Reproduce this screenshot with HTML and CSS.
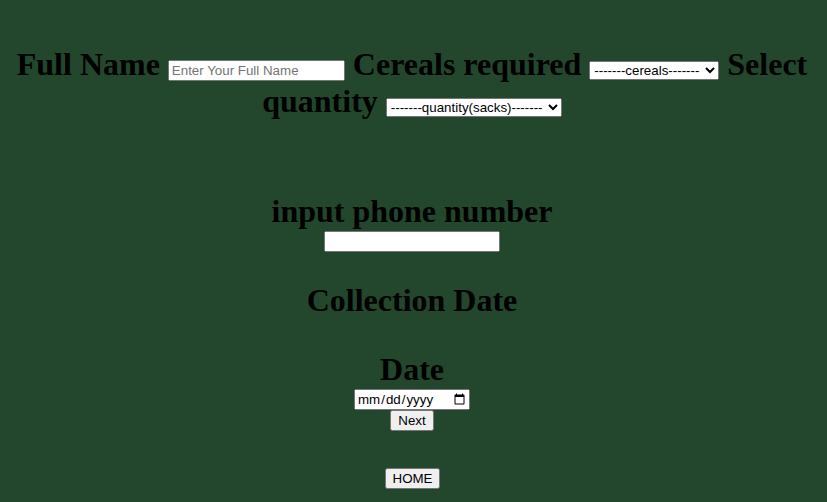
FILE: index.html
```html
<!DOCTYPE html>
<html>
<head>
<meta charset="utf-8">
<link rel="stylesheet" href="styles.css">
</head>
<body class="page">
<form class="order">
  <h1 class="head head-first">Full Name <input class="ctl name" type="text" placeholder="Enter Your Full Name"> Cereals required <select class="ctl cereals"><option>-------cereals-------</option></select> Select quantity <select class="ctl qty"><option>-------quantity(sacks)-------</option></select></h1>
  <h1 class="head head-phone">input phone number</h1>
  <div class="row row-phone"><input class="ctl phone" type="tel"></div>
  <h1 class="head head-coll">Collection Date</h1>
  <h1 class="head head-date">Date</h1>
  <div class="row row-date"><input class="ctl date" type="date"></div>
  <div class="row row-next"><button class="ctl btn next" type="button">Next</button></div>
  <div class="row row-home"><button class="ctl btn home" type="button">HOME</button></div>
</form>
</body>
</html>
```
FILE: styles.css
```css
html { background: #22472d; }
.page {
  margin: 0;
  padding: 8px 11px 8px 8px;
  background: #22472d;
  text-align: center;
  font-family: "Liberation Serif", "Times New Roman", serif;
  color: #000;
}
.order { margin: 0; }
.head {
  font-size: 32px;
  font-weight: bold;
  line-height: 37px;
  margin: 0;
}
.head-first { margin-top: 38px; }
.head-phone { margin-top: 73px; }
.head-coll { margin-top: 30px; }
.head-date { margin-top: 32px; }

.ctl {
  font-family: "Liberation Sans", Arial, sans-serif;
  font-size: 13.33px;
  vertical-align: baseline;
  box-sizing: border-box;
  color: #000;
}
.ctl::placeholder { color: #757575; }
.name { width: 177px; }
.cereals { width: 130px; }
.qty { width: 176px; }
.phone { width: 176px; }
.date { width: 116px; }
.next { width: 44px; height: 21px; }
.home { width: 55px; height: 21px; }

.row { display: flex; justify-content: center; }
.row-phone { margin-top: 1px; }
.row-date { margin-top: 1px; }
.row-next { margin-top: 0; }
.row-home { margin-top: 37px; }
```
